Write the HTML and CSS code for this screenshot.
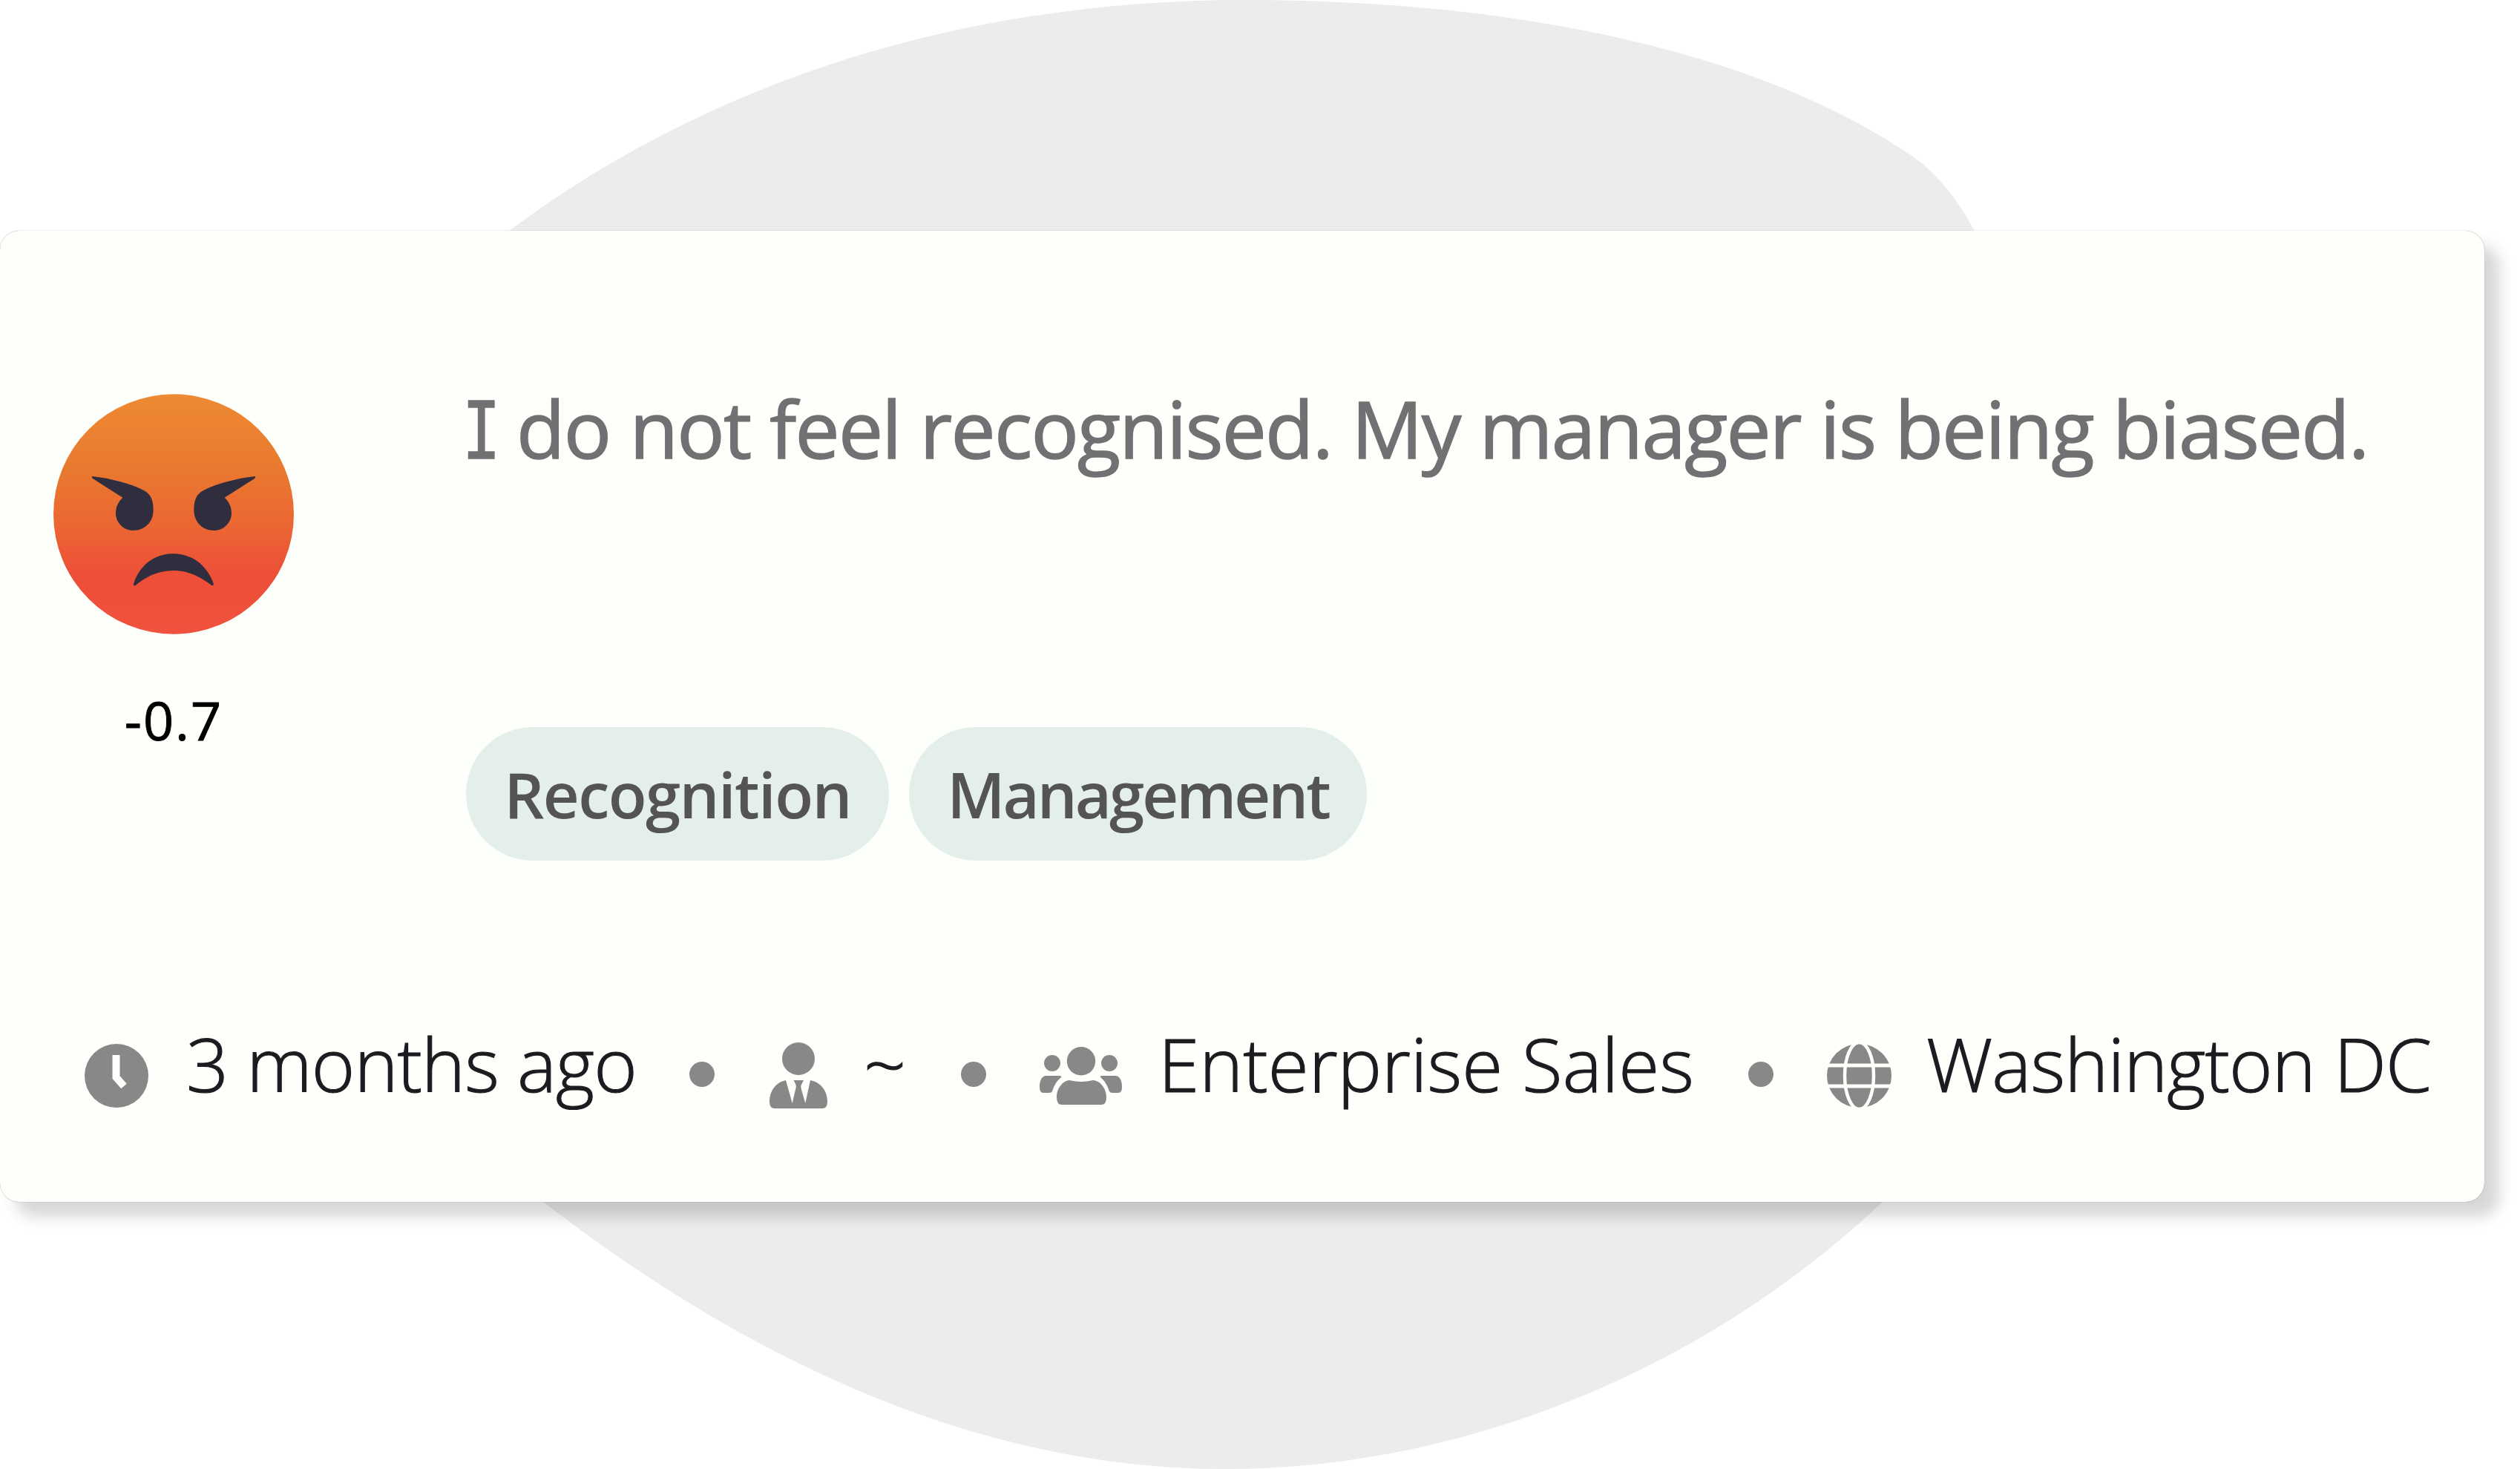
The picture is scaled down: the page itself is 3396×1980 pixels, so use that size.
FILE: index.html
```html
<!DOCTYPE html>
<html lang="en">

<head>
    <meta charset="UTF-8">
    <meta name="viewport" content="width=device-width, initial-scale=1.0">
    <title>Feedback</title>
    <link rel="stylesheet" href="styles.css">
</head>

<body>
    <svg class="blob" viewBox="0 0 3396 1980">
        <path d="M686 311C986 88 1337 0 1677 0C2030 0 2360 64 2575 209C2613 235 2638 270 2661 311C2860 700 2960 1240 2537 1620C2305 1840 1980 1980 1651 1980C1320 1980 1010 1835 732 1620C300 1260 300 640 686 311Z" />
    </svg>
    <div class="card">
        <div class="top">
            <div class="mood">
                <svg class="face" viewBox="66 62 972 970">
                    <defs>
                        <linearGradient id="anger" x1="0" y1="0" x2="0" y2="1">
                            <stop offset="0" stop-color="#ee8a33" />
                            <stop offset=".3" stop-color="#e97a2f" />
                            <stop offset=".55" stop-color="#eb6633" />
                            <stop offset=".76" stop-color="#ed4e38" />
                            <stop offset="1" stop-color="#f0523d" />
                        </linearGradient>
                        <path id="eye" d="M222 394C300 402 380 425 430 450C460 465 470 490 470 530C470 580 435 613 390 613C348 613 318 580 318 543C318 515 330 495 346 480L226 404Q219 397 222 394Z" />
                    </defs>
                    <ellipse cx="552" cy="547" rx="486" ry="485" fill="url(#anger)" />
                    <g fill="#302d3e">
                        <use href="#eye" />
                        <use href="#eye" transform="translate(1104 0) scale(-1 1)" />
                        <path d="M390 830C410 760 470 707 550 707C632 707 690 760 714 830Q712 838 706 835C660 800 610 775 552 775C490 775 440 800 398 835Q388 838 390 830Z" />
                    </g>
                </svg>
                <div class="score">-0.7</div>
            </div>
            <div class="content">
                <p class="comment"><span class="serif-i">I</span> do not feel recognised. My manager is being biased.</p>
                <ul class="tags">
                    <li class="recognition">Recognition</li>
                    <li class="management">Management</li>
                </ul>
            </div>
        </div>
        <ul class="info">
            <li class="time">
                <svg class="clock" viewBox="0 0 86 86">
                    <circle cx="43" cy="43" r="43" />
                    <path class="line" d="M42.5 15V45L53 57" stroke-width="10" />
                </svg>
                <span>3 months ago</span>
            </li>
            <li class="dot"></li>
            <li class="person">
                <svg class="user" viewBox="0 0 78 89">
                    <ellipse cx="39" cy="22" rx="22" ry="22" />
                    <path d="M22 51C8 54 0 66 0 80Q0 89 7 89H71Q78 89 78 80C78 66 70 54 55 51L48.3 82L43.4 65Q41.5 59 43 57L46 51H32.6L35.5 57Q36.5 60 34.9 64L30.7 82Z" />
                </svg>
                <span>~</span>
            </li>
            <li class="dot"></li>
            <li class="team">
                <svg class="users" viewBox="0 0 111 78">
                    <defs>
                        <g id="side">
                            <circle cx="17" cy="22" r="11" />
                            <path d="M8 39H27Q31 39 28 42C22 47 19 54 17 60Q16 62 13 62H5Q0 62 0 54C0 45 3 40 8 39Z" />
                        </g>
                    </defs>
                    <circle cx="56" cy="19.3" r="19.2" />
                    <path d="M40 45Q56 49 72 45C82 46 90 56 90 68Q90 78 83 78H30Q23 78 23 68C23 56 31 46 40 45Z" />
                    <use href="#side" />
                    <use href="#side" transform="translate(111 0) scale(-1 1)" />
                </svg>
                <span>Enterprise Sales</span>
            </li>
            <li class="dot"></li>
            <li class="place">
                <svg class="globe" viewBox="0 0 87 86">
                    <ellipse cx="43.5" cy="43" rx="43.5" ry="43" />
                    <path class="line" d="M0 29H87M0 57H87" stroke-width="5" />
                    <ellipse class="line" cx="43.5" cy="43" rx="19.5" ry="45" stroke-width="4.5" />
                </svg>
                <span>Washington DC</span>
            </li>
        </ul>
    </div>
</body>

</html>
```

FILE: styles.css
```css
* {
    margin: 0;
    padding: 0;
    box-sizing: border-box;
}

body {
    width: 3396px;
    height: 1980px;
    padding-top: 311px;
    overflow: hidden;
    background-color: #fff;
    font-family: "Open Sans", "Noto Sans", sans-serif;
    white-space: nowrap;
}

li {
    list-style: none;
}

svg {
    display: block;
    flex: none;
}

.blob {
    position: absolute;
    left: 0;
    top: 0;
    width: 3396px;
    height: 1980px;
    fill: #ebeced;
    z-index: -1;
}

.card {
    width: 3348px;
    height: 1309px;
    padding-top: 194px;
    border-radius: 26px;
    background-color: #fdfffa;
    box-shadow: 0 0 1px rgba(0, 0, 0, .5), 20px 20px 20px rgba(0, 0, 0, .16);
}

.top {
    display: flex;
    height: 655px;
}

.mood {
    width: 324px;
    margin-left: 72px;
    padding-top: 26px;
}

.face {
    width: 324px;
    height: 324px;
}

.score {
    margin-top: 70px;
    text-align: center;
    font-size: 72px;
    letter-spacing: 2px;
    line-height: 90px;
    color: #000;
    -webkit-text-stroke: 1px #000;
}

.content {
    margin-left: 232px;
}

.comment {
    padding-top: 2px;
    font-size: 107px;
    letter-spacing: -1.75px;
    line-height: 140px;
    color: #707173;
    -webkit-text-stroke: 1.5px #707173;
}

.serif-i {
    display: inline-block;
    width: 47px;
    margin-left: -5px;
    font-family: "DejaVu Sans Mono", monospace;
    line-height: 1;
    transform: scaleX(.8);
    transform-origin: 0 0;
}

.tags {
    display: flex;
    gap: 27px;
    margin-top: 333px;
}

.tags li {
    height: 180px;
    border-radius: 90px;
    background-color: #e4efeb;
    text-align: center;
    font-size: 85px;
    font-weight: 600;
    line-height: 180px;
    color: #545457;
}

.tags .recognition {
    width: 570px;
    letter-spacing: -1.6px;
}

.tags .management {
    width: 617px;
    letter-spacing: -3px;
}

.info {
    display: flex;
    margin-top: 203px;
    padding-left: 114px;
    font-size: 100px;
    font-weight: 300;
    line-height: 140px;
    color: #1b1c20;
    -webkit-text-stroke: 1.2px #1b1c20;
}

.info li {
    display: flex;
    flex: none;
    gap: 49px;
}

.info svg {
    fill: #888;
}

.info .line {
    fill: none;
    stroke: #fdfffa;
}

.info .time {
    width: 815px;
    gap: 51px;
    letter-spacing: -.9px;
}

.info .person {
    width: 258px;
    margin-left: 74px;
}

.info .team {
    width: 955px;
    margin-left: 72px;
}

.info .place {
    gap: 47px;
    margin-left: 72px;
    letter-spacing: -.85px;
}

.info .dot {
    width: 34px;
    height: 34px;
    margin-top: 68px;
    border-radius: 50%;
    background-color: #888;
}

.clock {
    width: 86px;
    height: 86px;
    margin-top: 44px;
}

.user {
    width: 78px;
    height: 89px;
    margin-top: 42px;
}

.users {
    width: 111px;
    height: 78px;
    margin-top: 48px;
}

.globe {
    width: 87px;
    height: 86px;
    margin-top: 44px;
}
```
